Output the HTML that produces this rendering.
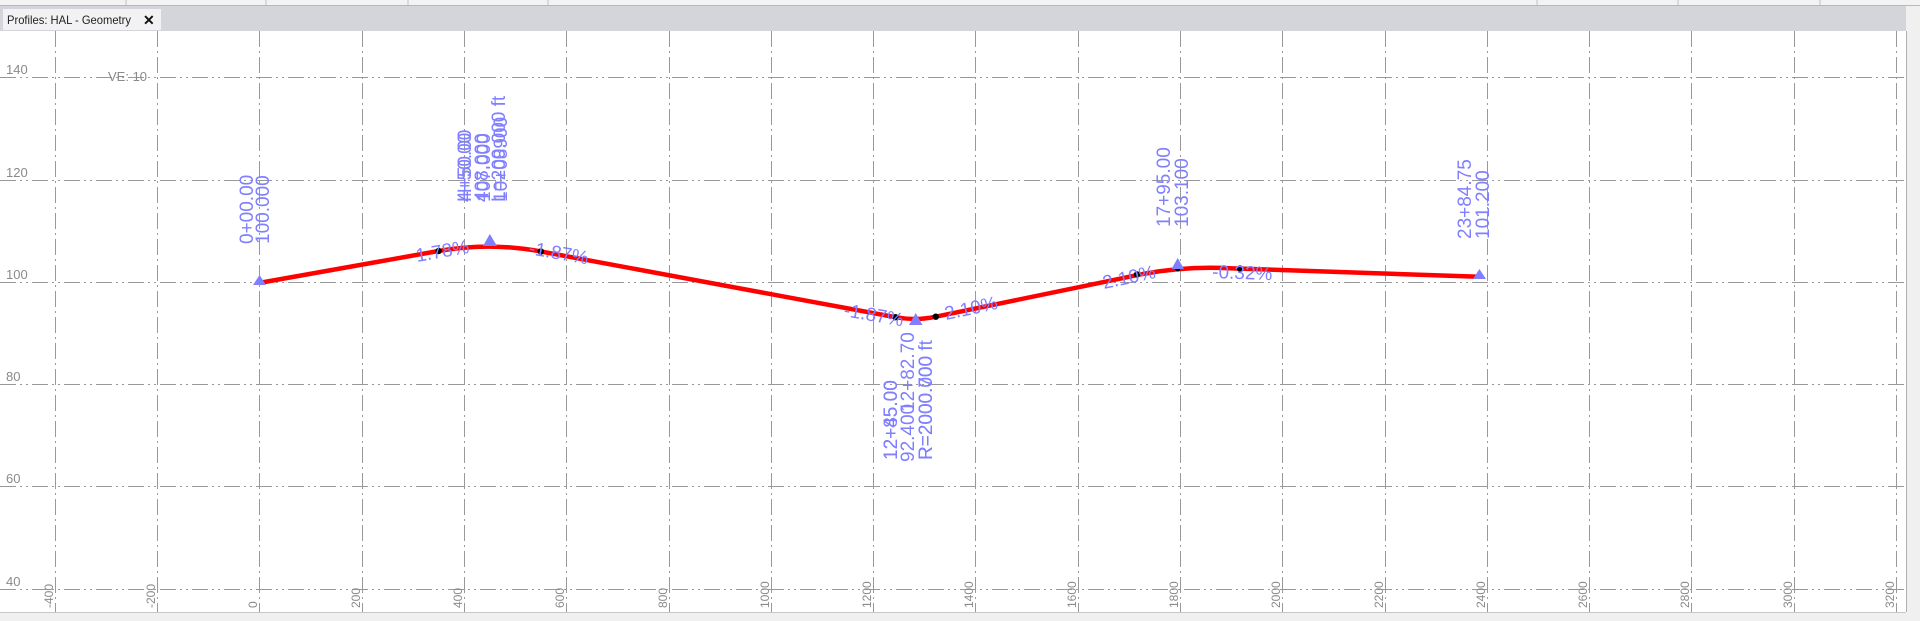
<!DOCTYPE html>
<html><head><meta charset="utf-8"><style>
html,body{margin:0;padding:0;width:1920px;height:621px;overflow:hidden;background:#fff;font-family:"Liberation Sans",sans-serif}
</style></head><body>
<svg width="1920" height="621" xmlns="http://www.w3.org/2000/svg" style="position:absolute;left:0;top:0">
<rect x="0" y="0" width="1920" height="6" fill="#f3f3f3"/>
<line x1="0" y1="5.5" x2="1920" y2="5.5" stroke="#b8b8b8"/>
<g stroke="#c0c0c0"><line x1="126" y1="0" x2="126" y2="5"/><line x1="266" y1="0" x2="266" y2="5"/><line x1="408" y1="0" x2="408" y2="5"/><line x1="548" y1="0" x2="548" y2="5"/><line x1="1537" y1="0" x2="1537" y2="5"/><line x1="1678" y1="0" x2="1678" y2="5"/><line x1="1820" y1="0" x2="1820" y2="5"/></g>
<rect x="0" y="6" width="1920" height="25" fill="#d4d5da"/>
<rect x="3" y="9" width="158" height="21" fill="#f2f2f4"/>
<text x="7" y="24" font-size="12" fill="#222" textLength="124" lengthAdjust="spacingAndGlyphs">Profiles: HAL - Geometry</text>
<text x="143" y="25" font-size="14" font-weight="bold" fill="#111">✕</text>
<rect x="0" y="31" width="1906" height="581" fill="#fff"/>
<rect x="1906" y="6" width="14" height="615" fill="#f0f0f0"/>
<line x1="1906.5" y1="31" x2="1906.5" y2="612" stroke="#b0b0b0"/>
<rect x="0" y="612" width="1920" height="9" fill="#f0f0f0"/>
<line x1="0" y1="612.5" x2="1906" y2="612.5" stroke="#c8c8c8"/>

<g stroke="#999" stroke-width="1" fill="none" stroke-dasharray="16,4,2,4,2,4">
<line x1="0" y1="77.5" x2="1906" y2="77.5"/>
<line x1="0" y1="180.5" x2="1906" y2="180.5"/>
<line x1="0" y1="282.5" x2="1906" y2="282.5"/>
<line x1="0" y1="384.5" x2="1906" y2="384.5"/>
<line x1="0" y1="486.5" x2="1906" y2="486.5"/>
<line x1="0" y1="589.5" x2="1906" y2="589.5"/>
</g>
<g stroke="#999" stroke-width="1" fill="none" stroke-dasharray="16,4,2,4">
<line x1="55.5" y1="31" x2="55.5" y2="612"/>
<line x1="157.5" y1="31" x2="157.5" y2="612"/>
<line x1="259.5" y1="31" x2="259.5" y2="612"/>
<line x1="362.5" y1="31" x2="362.5" y2="612"/>
<line x1="464.5" y1="31" x2="464.5" y2="612"/>
<line x1="566.5" y1="31" x2="566.5" y2="612"/>
<line x1="669.5" y1="31" x2="669.5" y2="612"/>
<line x1="771.5" y1="31" x2="771.5" y2="612"/>
<line x1="873.5" y1="31" x2="873.5" y2="612"/>
<line x1="975.5" y1="31" x2="975.5" y2="612"/>
<line x1="1078.5" y1="31" x2="1078.5" y2="612"/>
<line x1="1180.5" y1="31" x2="1180.5" y2="612"/>
<line x1="1282.5" y1="31" x2="1282.5" y2="612"/>
<line x1="1385.5" y1="31" x2="1385.5" y2="612"/>
<line x1="1487.5" y1="31" x2="1487.5" y2="612"/>
<line x1="1589.5" y1="31" x2="1589.5" y2="612"/>
<line x1="1691.5" y1="31" x2="1691.5" y2="612"/>
<line x1="1794.5" y1="31" x2="1794.5" y2="612"/>
<line x1="1896.5" y1="31" x2="1896.5" y2="612"/>
</g>

<g font-size="13" fill="#8a8a8a">
<text x="6" y="74">140</text><text x="6" y="177">120</text><text x="6" y="279">100</text>
<text x="6" y="381">80</text><text x="6" y="483">60</text><text x="6" y="586">40</text>
<text x="108" y="81">VE: 10</text>
</g>
<g font-size="12" fill="#8a8a8a">
<text transform="translate(53,608) rotate(-90)">-400</text>
<text transform="translate(155,608) rotate(-90)">-200</text>
<text transform="translate(257,608) rotate(-90)">0</text>
<text transform="translate(360,608) rotate(-90)">200</text>
<text transform="translate(462,608) rotate(-90)">400</text>
<text transform="translate(564,608) rotate(-90)">600</text>
<text transform="translate(667,608) rotate(-90)">800</text>
<text transform="translate(769,608) rotate(-90)">1000</text>
<text transform="translate(871,608) rotate(-90)">1200</text>
<text transform="translate(973,608) rotate(-90)">1400</text>
<text transform="translate(1076,608) rotate(-90)">1600</text>
<text transform="translate(1178,608) rotate(-90)">1800</text>
<text transform="translate(1280,608) rotate(-90)">2000</text>
<text transform="translate(1383,608) rotate(-90)">2200</text>
<text transform="translate(1485,608) rotate(-90)">2400</text>
<text transform="translate(1587,608) rotate(-90)">2600</text>
<text transform="translate(1689,608) rotate(-90)">2800</text>
<text transform="translate(1792,608) rotate(-90)">3000</text>
<text transform="translate(1894,608) rotate(-90)">3200</text>
</g>

<path d="M259.6,282.9 L438.6,251 Q489.8,241.9 540.9,251.5 L895.4,317.2 Q915.7,321 935.8,316.7 L1126.6,277.3 Q1177.7,265.6 1228.9,268.2 L1479.4,276.8" stroke="#ff0000" stroke-width="4.5" fill="none"/>

<g fill="#000">
<circle cx="438.6" cy="251" r="3.2"/><circle cx="540.9" cy="251.5" r="3.2"/>
<circle cx="895.4" cy="317.2" r="3.2"/><circle cx="935.8" cy="316.7" r="3.2"/>
<circle cx="1137" cy="274.5" r="3.2"/><circle cx="1240" cy="268.5" r="3.2"/><circle cx="1177.7" cy="269" r="2.5"/>
</g>
<g fill="#7f7fff">
<polygon points="259.6,275 253,285 266,285"/>
<polygon points="489.8,234 483,246 497,246"/>
<polygon points="915.7,313 909,325 922.5,325"/>
<polygon points="1177.7,258 1171.5,269 1184,269"/>
<polygon points="1479.4,269 1473,279 1486,279"/>
</g>

<g font-size="19" fill="#7f7fff">
<text transform="translate(253,244) rotate(-90)">0+00.00</text>
<text transform="translate(269,244) rotate(-90)">100.000</text>
<text transform="translate(471,202) rotate(-90)">H+50.00</text>
<text transform="translate(471,202) rotate(-90)">4+50.00</text>
<text transform="translate(488,202) rotate(-90)">408.000</text>
<text transform="translate(490,202) rotate(-90)">107.000</text>
<text transform="translate(505,202) rotate(-90)">L=200.000 ft</text>
<text transform="translate(507,202) rotate(-90)">10+08900</text>
<text transform="translate(897,460) rotate(-90)">12+85.00</text>
<text transform="translate(897,460) rotate(-90)">12+45.00</text>
<text transform="translate(914,462) rotate(-90)">92.400</text>
<text transform="translate(914,412) rotate(-90)">12+82.70</text>
<text transform="translate(932,460) rotate(-90)">R=2000.000 ft</text>
<text transform="translate(932,460) rotate(-90)">R=2000.700</text>
<text transform="translate(1170,227) rotate(-90)">17+95.00</text>
<text transform="translate(1188,227) rotate(-90)">103.100</text>
<text transform="translate(1471,239) rotate(-90)">23+84.75</text>
<text transform="translate(1489,239) rotate(-90)">101.200</text>
<text transform="translate(417,262) rotate(-10)">1.78%</text>
<text transform="translate(528,254) rotate(10)">-1.87%</text>
<text transform="translate(843,316) rotate(10)">-1.87%</text>
<text transform="translate(946,320) rotate(-12)">2.10%</text>
<text transform="translate(1104,289) rotate(-12)">2.10%</text>
<text transform="translate(1212,278) rotate(2)">-0.32%</text>
</g>
</svg>
</body></html>
